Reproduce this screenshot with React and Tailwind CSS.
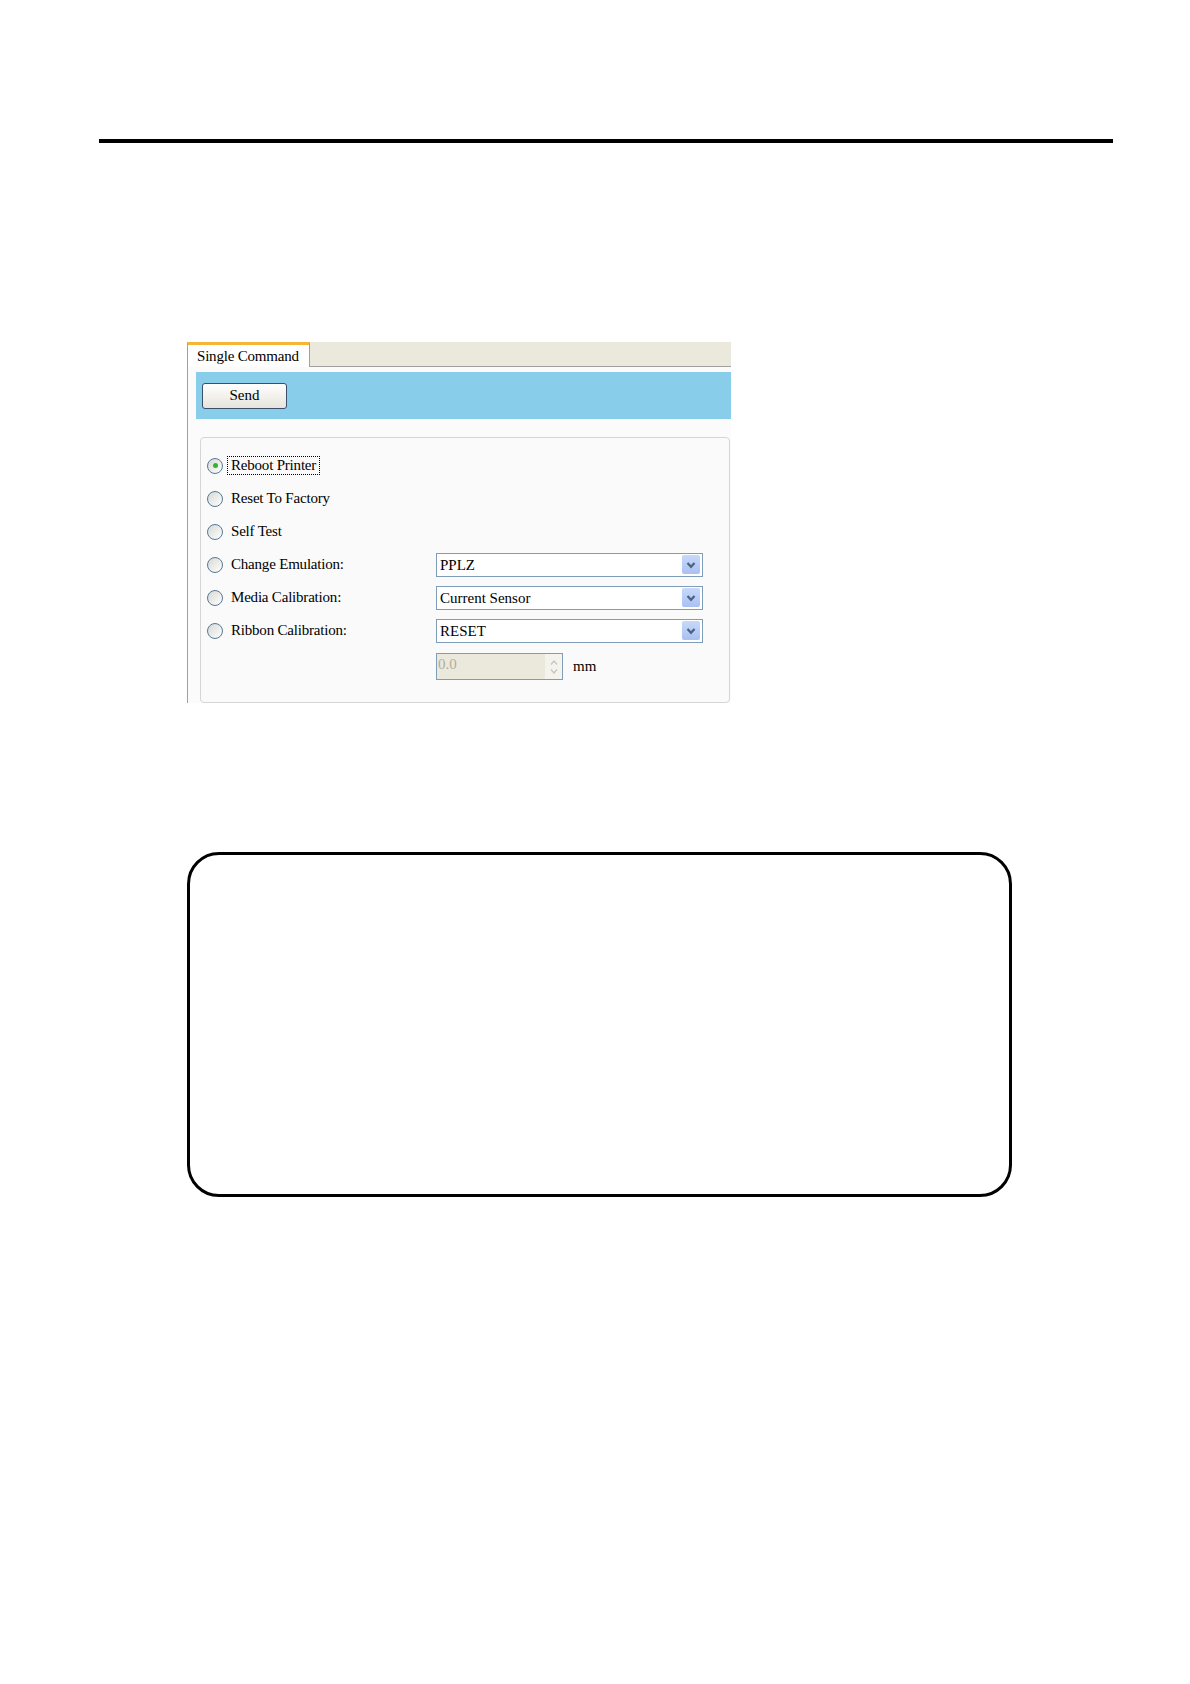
const rows = [
  { id: 1, label: "Reboot Printer", checked: true },
  { id: 2, label: "Reset To Factory" },
  { id: 3, label: "Self Test" },
  { id: 4, label: "Change Emulation:", select: "PPLZ" },
  { id: 5, label: "Media Calibration:", select: "Current Sensor" },
  { id: 6, label: "Ribbon Calibration:", select: "RESET" },
];

function Radio({ checked }) {
  return (
    <span className="flex h-[16px] w-[16px] flex-none items-center justify-center rounded-full border-[1.5px] border-[#55789a] bg-gradient-to-br from-[#d8d8d2] to-[#ffffff]">
      {checked && <span className="h-[5px] w-[5px] rounded-full bg-[#2fb52f]" />}
    </span>
  );
}

function Select({ value }) {
  return (
    <div className="flex h-[24px] w-[267px] items-center border border-[#7f9db9] bg-white pl-[3px] pr-[2px]">
      <span className="flex-1 pt-[2px] text-[15px] text-black">{value}</span>
      <span className="flex h-[19px] w-[18px] items-center justify-center rounded-[2px] bg-gradient-to-b from-[#c8d8fa] to-[#a9c1f1]">
        <svg viewBox="0 0 10 10" className="h-[10px] w-[10px]" aria-hidden="true">
          <path d="M1.5 3 L5 6.8 L8.5 3" fill="none" stroke="#4d6185" strokeWidth="2.2" />
        </svg>
      </span>
    </div>
  );
}

export default function App() {
  return (
    <div className="min-h-[1684px] bg-white font-['Liberation_Serif',serif] text-black">
      <div className="pt-[139px]">
        <div className="ml-[99px] h-[4px] w-[1014px] bg-black" />

        <div className="ml-[187px] mt-[199px] w-[544px]">
          <div className="relative flex h-[25px] items-end border-b border-[#a0a0a0] bg-[#ebe9dc]">
            <div className="-mb-px flex h-[25px] w-[123px] items-center border-x border-t-[3px] border-[#a0a0a0] border-t-[#f5b53a] bg-white pl-[9px] text-[15px] tracking-[-0.2px]">
              Single Command
            </div>
          </div>
          <div className="h-[336px] border-l border-[#a0a0a0] bg-[#fbfbfb] pt-[5px]">
            <div className="ml-[8px] flex h-[47px] items-center bg-[#88cdea] pl-[6px]">
              <button className="h-[26px] w-[85px] rounded-[3px] border border-[#3c4f6a] bg-gradient-to-b from-[#ffffff] to-[#e6e4dc] text-[15px]">
                Send
              </button>
            </div>
            <div className="ml-[12px] mt-[18px] h-[266px] w-[530px] rounded-[4px] border border-[#d6d6d2] bg-[#fafafa] pt-[11px]">
              {rows.map((row) => (
                <div key={row.id} className="flex h-[33px] items-center">
                  <div className="flex w-[235px] items-center pl-[6px]">
                    <Radio checked={row.checked} />
                    <span
                      className={
                        row.checked
                          ? "ml-[4px] border border-dotted border-black px-[3px] text-[15px] leading-[17px] tracking-[-0.2px]"
                          : "ml-[8px] text-[15px] leading-[17px] tracking-[-0.2px]"
                      }
                    >
                      {row.label}
                    </span>
                  </div>
                  {row.select && <Select value={row.select} />}
                </div>
              ))}
              <div className="ml-[235px] mt-[6px] flex items-center">
                <div className="flex h-[27px] w-[127px] border border-[#7f9db9] bg-[#ebe9dc]">
                  <span className="flex-1 pl-[1px] text-[15px] leading-[20px] text-[#b0ad9e]">0.0</span>
                  <span className="flex w-[17px] flex-col items-center justify-center gap-[4px] bg-[#f4f3ee]">
                    <svg viewBox="0 0 8 5" className="h-[5px] w-[8px]" aria-hidden="true">
                      <path d="M1 4.5 L4 1 L7 4.5" fill="none" stroke="#c6c4bb" strokeWidth="1.2" />
                    </svg>
                    <svg viewBox="0 0 8 5" className="h-[5px] w-[8px]" aria-hidden="true">
                      <path d="M1 0.5 L4 4 L7 0.5" fill="none" stroke="#c6c4bb" strokeWidth="1.2" />
                    </svg>
                  </span>
                </div>
                <span className="ml-[10px] text-[15px]">mm</span>
              </div>
            </div>
          </div>
        </div>

        <div className="ml-[187px] mt-[149px] h-[345px] w-[825px] rounded-[32px] border-[3px] border-black" />
      </div>
    </div>
  );
}
